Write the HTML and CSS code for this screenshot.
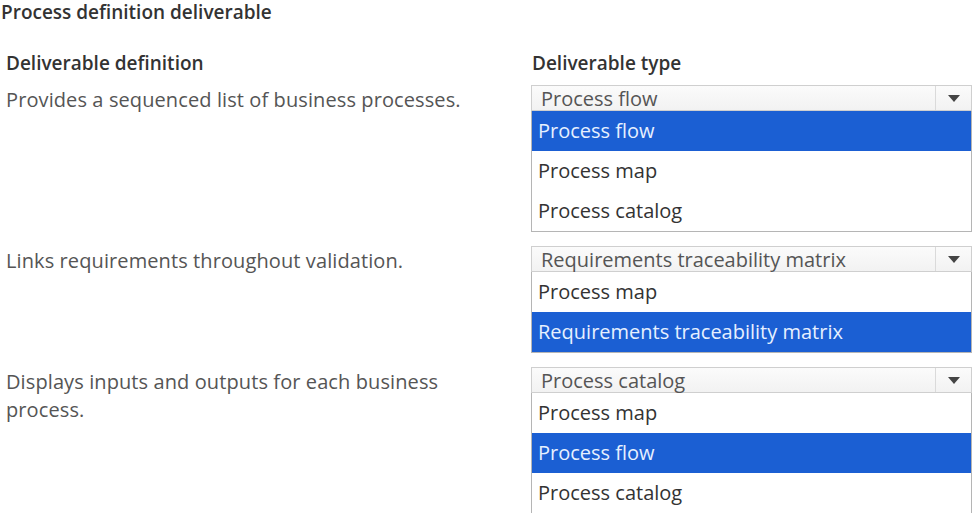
FILE: index.html
```html
<!DOCTYPE html>
<html lang="en">
<head>
    <meta charset="UTF-8">
    <title>Process definition deliverable</title>
    <link rel="stylesheet" href="styles.css">
</head>
<body>
    <h1 class="title">Process definition deliverable</h1>

    <div class="row head">
        <div class="col-left">Deliverable definition</div>
        <div class="col-right">Deliverable type</div>
    </div>

    <div class="row">
        <div class="col-left desc">Provides a sequenced list of business processes.</div>
        <div class="col-right">
            <div class="select">
                <span class="value">Process flow</span>
                <span class="arrow"></span>
            </div>
            <ul class="options">
                <li class="selected">Process flow</li>
                <li>Process map</li>
                <li>Process catalog</li>
            </ul>
        </div>
    </div>

    <div class="row">
        <div class="col-left desc">Links requirements throughout validation.</div>
        <div class="col-right">
            <div class="select">
                <span class="value">Requirements traceability matrix</span>
                <span class="arrow"></span>
            </div>
            <ul class="options">
                <li>Process map</li>
                <li class="selected">Requirements traceability matrix</li>
            </ul>
        </div>
    </div>

    <div class="row">
        <div class="col-left desc">Displays inputs and outputs for each business<br>process.</div>
        <div class="col-right">
            <div class="select">
                <span class="value">Process catalog</span>
                <span class="arrow"></span>
            </div>
            <ul class="options">
                <li>Process map</li>
                <li class="selected">Process flow</li>
                <li>Process catalog</li>
            </ul>
        </div>
    </div>
</body>
</html>
```

FILE: styles.css
```css
body {
    margin: 0;
    background: #fff;
    font-family: 'Open Sans', 'Noto Sans', sans-serif;
    color: #555;
}

.title {
    margin: 0;
    padding-left: 1px;
    line-height: 24px;
    font-size: 19px;
    font-weight: 600;
    color: #333;
}

.row {
    display: grid;
    grid-template-columns: 531px 441px;
    margin-bottom: 14px;
}

.head {
    margin-top: 27px;
    margin-bottom: 10px;
    font-size: 19px;
    font-weight: 600;
    color: #333;
    line-height: 24px;
}

.col-left {
    padding-left: 6px;
}

.head .col-right {
    padding-left: 1px;
}

.desc {
    font-size: 20px;
    letter-spacing: 0.1px;
    line-height: 28px;
    padding-top: 1px;
}

.select {
    display: flex;
    height: 26px;
    box-sizing: border-box;
    border: 1px solid #cfcfcf;
    background: linear-gradient(#fbfbfb, #f2f2f2);
}

.value {
    flex: 1;
    padding: 1px 0 0 9px;
    font-size: 20px;
    line-height: 24px;
    color: #555;
    white-space: nowrap;
}

.arrow {
    width: 35px;
    border-left: 1px solid #dadada;
    display: flex;
    align-items: center;
    justify-content: center;
}

.arrow::after {
    content: "";
    border-left: 6px solid transparent;
    border-right: 6px solid transparent;
    border-top: 7px solid #444;
}

.options {
    list-style: none;
    margin: 0;
    padding: 0;
    border: 1px solid #b5b5b5;
    border-top: none;
}

.options li {
    height: 40px;
    line-height: 40px;
    padding-left: 6px;
    font-size: 20px;
    color: #333;
    white-space: nowrap;
}

.options li.selected {
    background: #1b5fd3;
    color: #e6f0ff;
}
```
